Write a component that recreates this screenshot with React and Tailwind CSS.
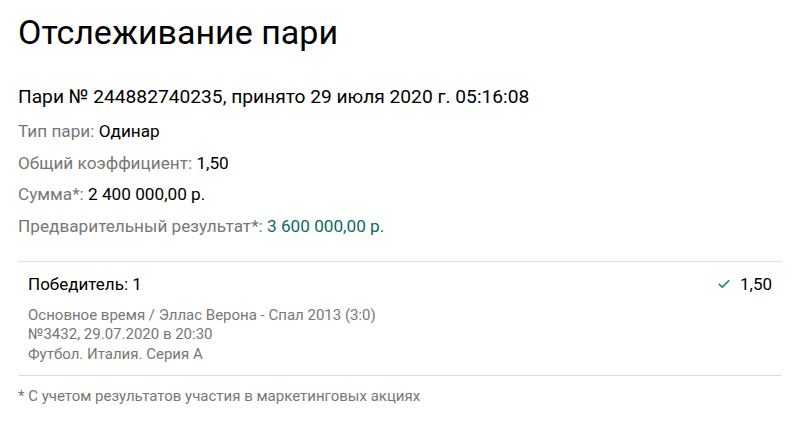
import React from "react";

export default function App() {
  return (
    <div className="w-[800px] h-[422px] bg-white px-[18px] pt-[10px] text-black" style={{ fontFamily: "Roboto, 'Noto Sans', sans-serif" }}>
      <h1 className="text-[34px] leading-[44px] font-normal">Отслеживание пари</h1>
      <div className="mt-[31px] text-[19.2px] leading-[24px]">Пари № 244882740235, принято 29 июля 2020 г. 05:16:08</div>
      <div className="mt-[7px] text-[17.2px] leading-[31.7px]">
        <div><span className="text-[#777777]">Тип пари: </span>Одинар</div>
        <div><span className="text-[#777777]">Общий коэффициент: </span>1,50</div>
        <div><span className="text-[#777777]">Сумма*: </span>2 400 000,00 р.</div>
        <div><span className="text-[#777777]">Предварительный результат*: </span><span className="text-[#0b6b5d]">3 600 000,00 р.</span></div>
      </div>
      <div className="mt-[18px] border-t border-b border-[#dddddd] px-[10px] pt-[12px] pb-[11px]">
        <div className="flex items-center justify-between text-[17px] leading-[20px]">
          <span>Победитель: 1</span>
          <span className="flex items-center gap-[9px]">
            <svg width="14" height="14" viewBox="0 0 24 24" fill="none" stroke="#1a9a6c" strokeWidth="3" strokeLinecap="round" strokeLinejoin="round"><path d="M4 12.5l5 5L20 6.5" /></svg>
            <span>1,50</span>
          </span>
        </div>
        <div className="mt-[12px] text-[15px] leading-[19.5px] text-[#777777]">
          <div>Основное время / Эллас Верона - Спал 2013 (3:0)</div>
          <div>№3432, 29.07.2020 в 20:30</div>
          <div>Футбол. Италия. Серия А</div>
        </div>
      </div>
      <div className="mt-[10px] text-[15px] leading-[20px] text-[#777777]">* С учетом результатов участия в маркетинговых акциях</div>
    </div>
  );
}
